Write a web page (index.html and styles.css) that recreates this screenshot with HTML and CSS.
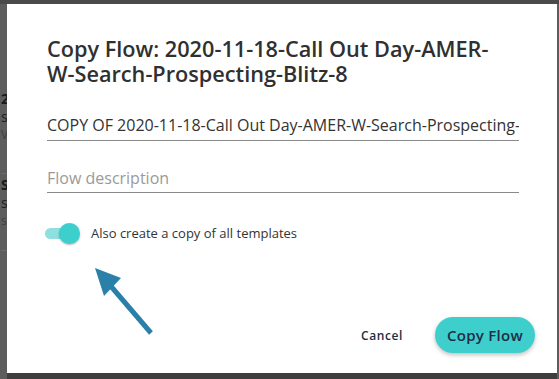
FILE: index.html
```html
<!DOCTYPE html>
<html>
<head>
<meta charset="utf-8">
<link rel="stylesheet" href="styles.css">
</head>
<body>
<div class="page">
  <div class="bg-list">
    <div class="bg-item">
      <div class="bg-title">2</div>
      <div class="bg-sub">s</div>
      <div class="bg-meta">V</div>
    </div>
    <div class="bg-item">
      <div class="bg-title">S</div>
      <div class="bg-sub">s</div>
      <div class="bg-meta">s</div>
    </div>
  </div>
  <div class="overlay">
    <div class="dialog">
      <h1 class="title">Copy Flow: 2020-11-18-Call Out Day-AMER-W-Search-Prospecting-Blitz-8</h1>
      <div class="field">
        <div class="field-text">COPY OF 2020-11-18-Call Out Day-AMER-W-Search-Prospecting-</div>
      </div>
      <div class="field">
        <div class="field-text placeholder">Flow description</div>
      </div>
      <div class="toggle-row">
        <span class="toggle"><span class="track"></span><span class="knob"></span></span>
        <span class="toggle-label">Also create a copy of all templates</span>
      </div>
      <svg class="arrow" width="70" height="80" viewBox="0 0 70 80">
        <line x1="60" y1="74" x2="18" y2="25" stroke="#2a80a8" stroke-width="5"/>
        <polygon points="4,9 30,19 13,37" fill="#2a80a8"/>
      </svg>
      <div class="actions">
        <button class="btn-cancel">Cancel</button>
        <button class="btn-primary">Copy Flow</button>
      </div>
    </div>
  </div>
</div>
</body>
</html>
```
FILE: styles.css
```css
html, body {
  margin: 0;
  padding: 0;
}
body {
  width: 559px;
  height: 379px;
  overflow: hidden;
  background: #5c5c5c;
  font-family: "Open Sans", "Liberation Sans", sans-serif;
}
.page {
  position: relative;
  width: 559px;
  height: 379px;
  background: #5d5d5d;
  border-top: 4px solid #4a4a4a;
  box-sizing: border-box;
  overflow: hidden;
}
.bg-list {
  width: 10px;
  padding: 84px 0 0 1px;
}
.bg-item {
  height: 86px;
  box-sizing: border-box;
  padding-top: 2px;
  border-bottom: 1px solid #6a6a6a;
}
.bg-item + .bg-item {
  height: 77px;
}
.bg-title {
  font-size: 14px;
  font-weight: 700;
  color: #1a1a1a;
  line-height: 18px;
}
.bg-sub {
  font-size: 14px;
  color: #1e1e1e;
  line-height: 18px;
}
.bg-meta {
  font-size: 12px;
  color: #404040;
  line-height: 18px;
}
.overlay {
  position: absolute;
  left: 7px;
  top: 0;
  width: 550px;
  height: 375px;
}
.dialog {
  position: relative;
  height: 100%;
  background: #fff;
  box-sizing: border-box;
  padding: 32px 40px 0 40px;
  border-bottom: 6px solid #3e3e3e;
}
.title {
  margin: 0;
  max-width: 455px;
  font-size: 21.7px;
  font-weight: 600;
  line-height: 25px;
  color: #303030;
}
.field {
  margin-top: 28px;
  width: 472px;
  border-bottom: 1px solid #8a8a8a;
  padding-bottom: 4px;
}
.field + .field {
  margin-top: 26px;
  padding-bottom: 3px;
}
.field-text {
  font-size: 16px;
  line-height: 22px;
  color: #333;
  white-space: nowrap;
  overflow: hidden;
}
.placeholder {
  color: #9a9a9a;
}
.toggle-row {
  display: flex;
  align-items: center;
  margin-top: 29px;
  margin-left: -2px;
}
.toggle {
  position: relative;
  width: 36px;
  height: 22px;
  margin-right: 10px;
}
.track {
  position: absolute;
  left: 0;
  top: 6px;
  width: 34px;
  height: 11px;
  border-radius: 6px;
  background: #8ee0de;
}
.knob {
  position: absolute;
  left: 14px;
  top: 1px;
  width: 21px;
  height: 21px;
  border-radius: 50%;
  background: #3ccfcc;
  box-shadow: 0 1px 2px rgba(0,0,0,0.3);
}
.toggle-label {
  font-size: 13px;
  color: #333;
  line-height: 18px;
}
.arrow {
  position: absolute;
  left: 84px;
  top: 255px;
}
.actions {
  position: absolute;
  right: 22px;
  top: 313px;
  display: flex;
  align-items: center;
  gap: 32px;
}
.btn-cancel {
  border: none;
  background: none;
  padding: 0;
  font-family: "Open Sans", "Liberation Sans", sans-serif;
  font-size: 12px;
  font-weight: 600;
  letter-spacing: 0.6px;
  color: #1f2d45;
}
.btn-primary {
  border: none;
  width: 100px;
  height: 36px;
  border-radius: 18px;
  background: #3ecfcc;
  font-family: "Open Sans", "Liberation Sans", sans-serif;
  font-size: 15px;
  font-weight: 600;
  color: #1f2d45;
  letter-spacing: 0.3px;
  box-shadow: 0 2px 4px rgba(0,0,0,0.25);
}
```
